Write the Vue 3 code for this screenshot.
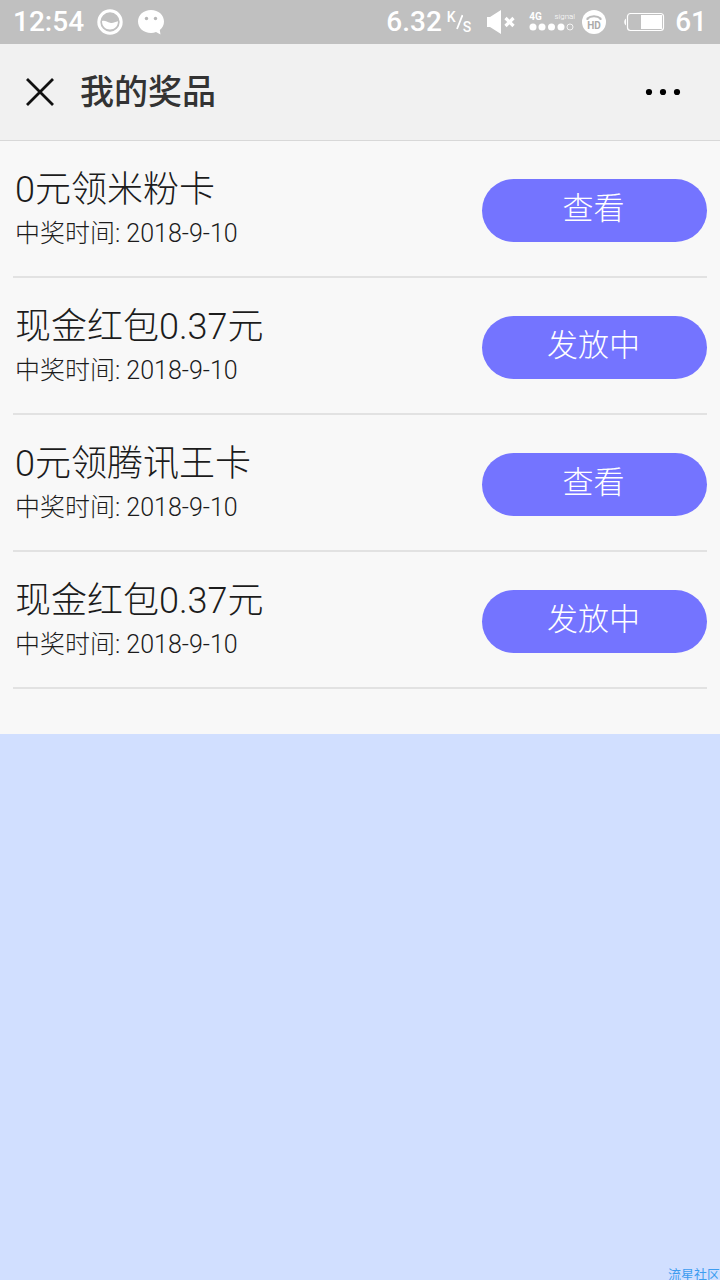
<script setup>
const prizes = [
  { name: '0元领米粉卡', date: '2018-9-10', action: '查看' },
  { name: '现金红包0.37元', date: '2018-9-10', action: '发放中' },
  { name: '0元领腾讯王卡', date: '2018-9-10', action: '查看' },
  { name: '现金红包0.37元', date: '2018-9-10', action: '发放中' },
]
</script>

<template>
  <div class="page">
    <div class="status">
      <span class="clock">12:54</span>
      <svg class="ring" width="26" height="26" viewBox="0 0 26 26">
        <circle cx="13" cy="13" r="11.2" fill="none" stroke="#fff" stroke-width="3" />
        <path d="M5 12C8 11 10 13 13 13.700S18 13 21 12.300C21 17.500 17.500 20.500 13 20.500S5 17.500 5 12Z" fill="#fff" />
      </svg>
      <svg class="chat" width="28" height="26" viewBox="0 0 28 26">
        <path d="M14 1C6.500 1 1 6 1 12.500S6.500 24 14 24c1.800 0 3.500-.3 5-.9l4.500 2.500-.7-4.700C25.500 18.800 27 15.800 27 12.500 27 6 21.500 1 14 1Z" fill="#fff" />
        <circle cx="9.500" cy="9.500" r="1.700" fill="#b8b8b8" />
        <circle cx="18.500" cy="9.500" r="1.700" fill="#b8b8b8" />
      </svg>
      <span class="speed">6.32</span>
      <span class="unit"><span>K</span><svg width="7" height="16" viewBox="0 0 7 16"><path d="M6.500 1 1 15" stroke="#fff" stroke-width="1.800" /></svg><span class="low">S</span></span>
      <svg class="mute" width="28" height="26" viewBox="0 0 28 26">
        <path d="M0 8h3L14 1v24L3 18H0Z" fill="#fff" />
        <path d="m18.500 9 8 8m0-8-8 8" stroke="#fff" stroke-width="3.200" />
      </svg>
      <div class="signal">
        <div class="network"><b>4G</b><span>signal</span></div>
        <svg width="46" height="8" viewBox="0 0 46 8">
          <g fill="#fff"><circle cx="4" cy="4" r="3.500" /><circle cx="13" cy="4" r="3.500" /><circle cx="22.500" cy="4" r="3.500" /><circle cx="32" cy="4" r="3.500" /></g>
          <circle cx="41" cy="4" r="3" fill="none" stroke="#fff" stroke-width=".8" />
        </svg>
      </div>
      <svg class="hd" width="24" height="24" viewBox="0 0 24 24">
        <circle cx="12" cy="12" r="12" fill="#fff" />
        <path d="M5.500 10V8.500C8.500 5.500 15.500 5.500 18.500 8.500V10" fill="none" stroke="#bbb" stroke-width="2" />
        <text x="12" y="19" text-anchor="middle" class="hd-text">HD</text>
      </svg>
      <svg class="battery" width="41" height="20" viewBox="0 0 41 20">
        <path d="M2 6.500C-.3 8-.3 12 2 13.500Z" fill="#fff" />
        <rect x="3.500" y="1.500" width="36" height="17" rx="3" fill="none" stroke="#fff" stroke-width="1.200" />
        <path d="M17 3h21v14H17Z" fill="#fff" />
      </svg>
      <span class="percent">61</span>
    </div>
    <header class="bar">
      <button class="icon-button" aria-label="关闭">
        <svg width="30" height="30" viewBox="0 0 30 30"><path d="m2 2 26 26M28 2 2 28" stroke="#111" stroke-width="2.800" /></svg>
      </button>
      <h1>我的奖品</h1>
      <button class="icon-button more" aria-label="更多">
        <svg width="36" height="8" viewBox="0 0 36 8"><circle cx="4" cy="4" r="3.100" /><circle cx="18" cy="4" r="3.100" /><circle cx="32" cy="4" r="3.100" /></svg>
      </button>
    </header>
    <ul class="list">
      <li v-for="(prize, i) in prizes" :key="i">
        <div class="info">
          <h2>{{ prize.name }}</h2>
          <p>中奖时间: {{ prize.date }}</p>
        </div>
        <button class="action">{{ prize.action }}</button>
      </li>
    </ul>
    <footer>流星社区</footer>
  </div>
</template>

<style>
body {
  background: #d1dfff;
}
</style>

<style scoped>
.page {
  display: flex;
  flex-direction: column;
  min-height: 100vh;
  background: #d1dfff;
  color: #1c1c1c;
  font-family: Roboto, "Noto Sans CJK SC", sans-serif;
}
.status {
  display: flex;
  align-items: center;
  box-sizing: border-box;
  height: 44px;
  padding: 0 13px;
  background: #c0c0c0;
  color: #fff;
  font-size: 28px;
  font-weight: 500;
  line-height: 44px;
}
.status svg {
  flex: none;
}
.ring {
  margin-left: 13px;
}
.chat {
  margin-left: 14px;
}
.speed {
  margin-left: auto;
}
.unit {
  display: flex;
  align-items: center;
  height: 24px;
  margin-left: 5px;
  font-size: 14px;
  line-height: 14px;
}
.unit span {
  align-self: flex-start;
}
.unit .low {
  align-self: flex-end;
}
.mute {
  margin-left: 16px;
}
.signal {
  display: flex;
  flex-direction: column;
  width: 46px;
  margin-left: 14px;
  padding-bottom: 3px;
}
.network {
  display: flex;
  justify-content: space-between;
  font-size: 10px;
  line-height: 12px;
}
.network span {
  font-size: 8px;
  font-weight: 300;
}
.hd {
  margin-left: 7px;
}
.hd-text {
  fill: #aaa;
  font-size: 10px;
  font-weight: 700;
}
.battery {
  margin-left: 18px;
}
.percent {
  margin-left: 10px;
}
.bar {
  display: flex;
  align-items: center;
  box-sizing: border-box;
  height: 97px;
  padding: 0 39px 0 25px;
  border-bottom: 1px solid #d8d8d8;
  background: #f1f1f1;
}
.icon-button {
  display: flex;
  padding: 0;
  border: 0;
  background: none;
}
.more {
  margin-left: auto;
}
h1 {
  margin: 0 0 0 25px;
  color: #333;
  font-size: 34px;
  font-weight: 500;
  line-height: 44px;
}
.list {
  margin: 0;
  padding: 0 13px 45px;
  background: #f8f8f8;
  list-style: none;
}
li {
  display: flex;
  align-items: center;
  justify-content: space-between;
  box-sizing: border-box;
  height: 137px;
  padding-top: 3px;
  border-bottom: 2px solid #e2e2e2;
}
.info {
  padding-left: 2px;
}
h2 {
  margin: 0;
  font-size: 36px;
  font-weight: 300;
  line-height: 48px;
}
p {
  margin: 0;
  font-size: 25px;
  font-weight: 300;
  line-height: 40px;
}
.action {
  width: 225px;
  height: 63px;
  padding: 0 2px 10px 0;
  border: 0;
  border-radius: 32px;
  background: #7474ff;
  color: #fff;
  font-family: inherit;
  font-size: 31px;
  font-weight: 300;
}
footer {
  margin-top: auto;
  color: #3d9cf0;
  font-size: 13px;
  line-height: 11px;
  text-align: right;
}
</style>
